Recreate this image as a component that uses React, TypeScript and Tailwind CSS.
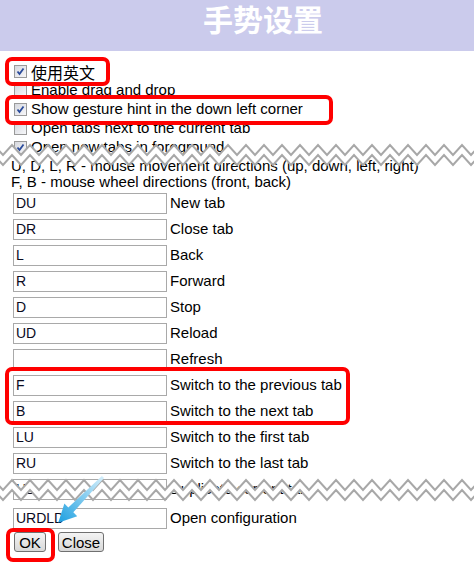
import React from "react";

const options = [
  { label: "使用英文", checked: true, cjk: true },
  { label: "Enable drag and drop", checked: false },
  { label: "Show gesture hint in the down left corner", checked: true },
  { label: "Open tabs next to the current tab", checked: false },
  { label: "Open new tabs in foreground", checked: true },
];

const gestures = [
  ["DU", "New tab"],
  ["DR", "Close tab"],
  ["L", "Back"],
  ["R", "Forward"],
  ["D", "Stop"],
  ["UD", "Reload"],
  ["", "Refresh"],
  ["F", "Switch to the previous tab"],
  ["B", "Switch to the next tab"],
  ["LU", "Switch to the first tab"],
  ["RU", "Switch to the last tab"],
  ["UL", "Duplicate current tab"],
];

function Checkbox({ checked }: { checked: boolean }) {
  return (
    <span className="relative inline-flex w-[13px] h-[13px] shrink-0 border border-[#9a9a9a] bg-gradient-to-br from-[#d6d8de] to-[#f7f7f9]">
      {checked && (
        <svg viewBox="0 0 11 11" className="absolute inset-0 w-[11px] h-[11px]">
          <path d="M2.5 5.5 L4.5 8 L8.5 2.5" fill="none" stroke="#2a4b9b" strokeWidth="1.8" />
        </svg>
      )}
    </span>
  );
}

// torn paper edge laid over the page
function Torn({ top }: { top: number }) {
  const p = 18;
  const topPts: string[] = [];
  const botPts: string[] = [];
  for (let x = -6, i = 0; x <= 480; x += p / 2, i++) {
    const y = i % 2 === 0 ? 2 : 12;
    topPts.push(`${x},${y}`);
    botPts.push(`${x},${y + 10}`);
  }
  const fill = [...topPts, ...[...botPts].reverse()].join(" ");
  return (
    <svg
      className="absolute left-0 w-[474px] h-[26px]"
      style={{ top }}
      viewBox="0 0 474 26"
    >
      <polygon points={fill} fill="#ffffff" />
      <polyline points={topPts.join(" ")} fill="none" stroke="#a8a8a8" strokeWidth="2" />
      <polyline points={botPts.join(" ")} fill="none" stroke="#a8a8a8" strokeWidth="2" />
    </svg>
  );
}

export default function App() {
  return (
    <div className="relative w-[474px] h-[566px] overflow-hidden bg-white text-black text-[15px] font-['Liberation_Sans','Noto_Sans_CJK_SC',sans-serif]">
      <header className="h-[51px] bg-[#cbcbec] pl-[203px] text-[30px] leading-[36px] font-bold text-white font-['Noto_Sans_CJK_SC',sans-serif]">
        手势设置
      </header>

      {/* options */}
      <div className="pl-[14px] pt-[11px]">
        {options.map((o) => (
          <div key={o.label} className="flex items-center h-[19px] gap-[4px]">
            <Checkbox checked={o.checked} />
            <span className={o.cjk ? "text-[16px] font-['Noto_Sans_CJK_SC',sans-serif]" : ""}>
              {o.label}
            </span>
          </div>
        ))}
      </div>

      <div className="pl-[11px] pt-px leading-[16px]">
        <div>U, D, L, R - mouse movement directions (up, down, left, right)</div>
        <div>F, B - mouse wheel directions (front, back)</div>
      </div>

      {/* gesture table */}
      <div className="pl-[13px]">
        {gestures.map(([g, label]) => (
          <div key={label} className="flex items-center h-[26px]">
            <input
              readOnly
              value={g}
              className="w-[154px] h-[21px] border border-[#a9a9a9] px-[2px] text-[14px] text-[#0a0a1e] outline-none"
            />
            <span className="ml-[3px]">{label}</span>
          </div>
        ))}
        <div className="flex items-center h-[26px] mt-[3px]">
          <input
            readOnly
            value="URDLD"
            className="w-[154px] h-[21px] border border-[#a9a9a9] px-[2px] text-[14px] text-[#0a0a1e] outline-none"
          />
          <span className="ml-[3px]">Open configuration</span>
        </div>
      </div>

      <div className="flex gap-[12px] pl-[14px] mt-px">
        <button className="w-[32px] h-[20px] border border-[#707070] rounded-[3px] bg-gradient-to-b from-[#f4f4f4] to-[#d8d8d8] text-[15px] leading-none">
          OK
        </button>
        <button className="w-[46px] h-[20px] border border-[#707070] rounded-[3px] bg-gradient-to-b from-[#f4f4f4] to-[#d8d8d8] text-[15px] leading-none">
          Close
        </button>
      </div>

      {/* torn edges */}
      <Torn top={143} />
      <Torn top={478} />

      {/* annotation arrow */}
      <svg className="absolute left-0 top-0 w-[474px] h-[566px] pointer-events-none" viewBox="0 0 474 566">
        <defs>
          <linearGradient id="arr" x1="0" y1="0" x2="64" y2="0" gradientUnits="userSpaceOnUse">
            <stop offset="0" stopColor="#d3eefb" />
            <stop offset="1" stopColor="#1c9fe0" />
          </linearGradient>
        </defs>
        <g transform="translate(103 477) rotate(134.4)">
          <polygon points="0,-1.5 46,-3.5 46,-9 64,0 46,9 46,3.5 0,1.5" fill="url(#arr)" />
        </g>
      </svg>

      {/* annotation boxes */}
      <div className="absolute left-[5px] top-[57px] w-[105px] h-[29px] border-[4px] border-[#ff0000] rounded-[7px]" />
      <div className="absolute left-[5px] top-[95px] w-[328px] h-[30px] border-[4px] border-[#ff0000] rounded-[7px]" />
      <div className="absolute left-[5px] top-[367px] w-[345px] h-[58px] border-[4px] border-[#ff0000] rounded-[7px]" />
      <div className="absolute left-[6px] top-[528px] w-[49px] h-[34px] border-[4px] border-[#ff0000] rounded-[7px]" />
    </div>
  );
}
